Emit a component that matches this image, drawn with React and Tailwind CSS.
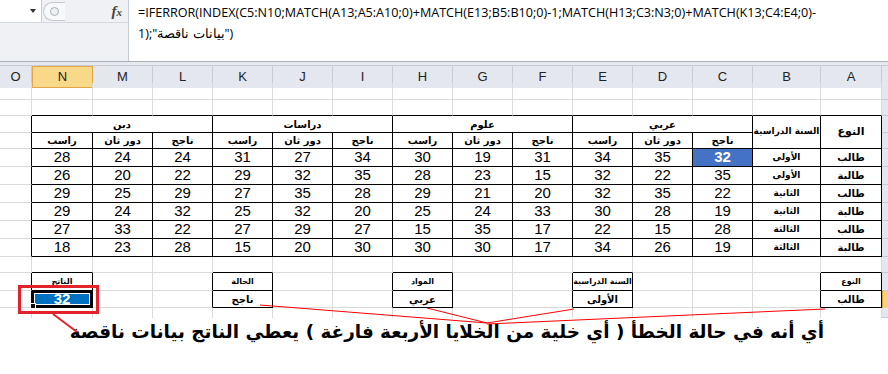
import React from 'react';

const COLS = ['O', 'N', 'M', 'L', 'K', 'J', 'I', 'H', 'G', 'F', 'E', 'D', 'C', 'B', 'A'];

const SUBS = ['راسب', 'دور ثان', 'ناجح'];
const GROUPS = ['دين', 'دراسات', 'علوم', 'عربي'];

const DATA = [
  { a: 'طالب', b: 'الأولى', v: [28, 24, 24, 31, 27, 34, 30, 19, 31, 34, 35, 32] },
  { a: 'طالبة', b: 'الأولى', v: [26, 20, 22, 29, 32, 35, 28, 23, 15, 32, 22, 35] },
  { a: 'طالب', b: 'الثانية', v: [29, 25, 29, 27, 35, 28, 29, 21, 20, 32, 35, 22] },
  { a: 'طالبة', b: 'الثانية', v: [29, 24, 32, 25, 32, 20, 25, 24, 33, 30, 28, 19] },
  { a: 'طالب', b: 'الثالثة', v: [27, 33, 22, 27, 29, 27, 15, 35, 17, 22, 15, 28] },
  { a: 'طالبة', b: 'الثالثة', v: [18, 23, 28, 15, 20, 30, 30, 30, 17, 34, 26, 19] },
];

const LOOKUP = {
  1: ['الناتج', null],
  4: ['الحالة', 'ناجح'],
  7: ['المواد', 'عربي'],
  10: ['السنة الدراسية', 'الأولى'],
  14: ['النوع', 'طالب'],
};

function inBox(r, c) {
  if (r >= 3 && r <= 10 && c >= 1 && c <= 14) return true;
  if ((r === 12 || r === 13) && LOOKUP[c]) return true;
  return false;
}

// build the cells of rows 1..14, left to right as they appear on screen
function buildRows() {
  const rows = [];
  for (let r = 1; r <= 14; r++) {
    const cells = [];
    if (r === 3) {
      cells.push({ r, c: 0 });
      GROUPS.forEach((g, i) => cells.push({ r, c: 1 + i * 3, cs: 3, text: g, kind: 'label' }));
      cells.push({ r, c: 13, rs: 2, text: 'السنة الدراسية', kind: 'small' });
      cells.push({ r, c: 14, rs: 2, text: 'النوع', kind: 'big' });
    } else if (r === 4) {
      cells.push({ r, c: 0 });
      for (let i = 0; i < 12; i++) cells.push({ r, c: 1 + i, text: SUBS[i % 3], kind: 'label' });
    } else if (r >= 5 && r <= 10) {
      const d = DATA[r - 5];
      cells.push({ r, c: 0 });
      d.v.forEach((n, i) => cells.push({ r, c: 1 + i, text: n, kind: r === 5 && i === 11 ? 'sel' : 'num' }));
      cells.push({ r, c: 13, text: d.b, kind: 'small' });
      cells.push({ r, c: 14, text: d.a, kind: 'label' });
    } else {
      for (let c = 0; c < 15; c++) {
        const l = LOOKUP[c];
        if (r === 12 && l) cells.push({ r, c, text: l[0], kind: 'tiny' });
        else if (r === 13 && c === 1) cells.push({ r, c, text: 32, kind: 'active' });
        else if (r === 13 && l) cells.push({ r, c, text: l[1], kind: 'label' });
        else cells.push({ r, c });
      }
    }
    cells.push({ r, c: 15, kind: 'hdr' });
    rows.push(...cells);
  }
  return rows;
}

function Cell({ cell }) {
  const { r, c, cs = 1, rs = 1, text, kind } = cell;
  if (kind === 'hdr') {
    return (
      <div
        className={
          r === 13
            ? 'bg-[#f6d47f] border-l border-[#e1a53c]'
            : 'bg-[#e4e8ee] border-b border-b-[#c5cbd3]'
        }
      />
    );
  }
  const lastC = c + cs - 1;
  const lastR = r + rs - 1;
  const rightBlack = inBox(r, lastC) || inBox(r, lastC + 1);
  const bottomBlack = inBox(lastR, c) || inBox(lastR + 1, c);
  const span = cs === 3 ? 'col-span-3' : rs === 2 ? 'row-span-2' : '';
  const borders = [
    'border-r',
    rightBlack ? 'border-r-black' : 'border-r-[#dadada]',
    r === 14 ? '' : 'border-b',
    bottomBlack ? 'border-b-black' : 'border-b-[#dadada]',
  ].join(' ');

  let inner = null;
  if (kind === 'num') {
    inner = <span className="text-[15px] font-['Liberation_Sans',sans-serif] text-black">{text}</span>;
  } else if (kind === 'sel') {
    inner = (
      <div className="flex h-full w-full items-center justify-center bg-[#4472c4] text-[15px] font-bold text-white font-['Liberation_Sans',sans-serif]">
        {text}
      </div>
    );
  } else if (kind === 'label') {
    inner = <span className="whitespace-nowrap text-[10px] font-bold font-['DejaVu_Sans',sans-serif] text-black">{text}</span>;
  } else if (kind === 'big') {
    inner = <span className="whitespace-nowrap text-[11px] font-bold font-['DejaVu_Sans',sans-serif] text-black">{text}</span>;
  } else if (kind === 'small') {
    inner = <span className="whitespace-nowrap text-[9px] font-bold font-['DejaVu_Sans',sans-serif] text-black">{text}</span>;
  } else if (kind === 'tiny') {
    inner = <span className="whitespace-nowrap text-[8px] font-bold font-['DejaVu_Sans',sans-serif] text-black">{text}</span>;
  } else if (kind === 'active') {
    inner = (
      <div className="relative h-full w-full border-2 border-black">
        <div className="flex h-full w-full items-center justify-center border border-white bg-[#0070c0] text-[15px] font-bold text-white font-['Liberation_Sans',sans-serif]">
          {text}
        </div>
        <div className="absolute -bottom-[4px] -left-[4px] h-[6px] w-[6px] border border-white bg-black" />
      </div>
    );
  }
  return (
    <div className={`${span} ${borders} flex items-center justify-center overflow-visible`}>
      {inner}
    </div>
  );
}

function FormulaBar() {
  return (
    <div className="flex h-[62px] border-b border-[#a9b0b8]">
      <div className="flex w-[128px] flex-col bg-[#eff1f4]">
        <div className="flex h-[23px] items-center border-b border-[#d5d9de]">
          <div className="flex h-full w-[42px] items-center justify-end border-r border-[#c9ced4] bg-white pr-[5px]">
            <span className="h-0 w-0 border-x-[3.5px] border-t-[4px] border-x-transparent border-t-[#333]" />
          </div>
          <div className="ml-[1px] flex h-[19px] w-[22px] items-center justify-center rounded-l-full border border-r-0 border-[#c3c8cf] bg-[#f7f8f9]">
            <span className="h-[9px] w-[9px] rounded-full border border-[#aab1ba] bg-[#eef0f2]" />
          </div>
          <div className="flex-1" />
          <span className="mr-[6px] font-['Liberation_Serif',serif] text-[15px] font-bold italic text-[#444]">
            f<span className="text-[11px]">x</span>
          </span>
        </div>
        <div className="flex-1" />
      </div>
      <div className="flex-1 border-l border-[#c6ccd3] bg-white pl-[9px] pt-[2px] font-['Open_Sans',sans-serif] text-[12.6px] leading-[21px] text-black">
        <div className="whitespace-nowrap">
          =IFERROR(INDEX(C5:N10;MATCH(A13;A5:A10;0)+MATCH(E13;B5:B10;0)-1;MATCH(H13;C3:N3;0)+MATCH(K13;C4:E4;0)-
        </div>
        <div className="whitespace-nowrap">1);"بيانات ناقصة")</div>
      </div>
    </div>
  );
}

function ColumnHeaders() {
  return (
    <div className="grid h-[17px] grid-cols-[32px_61px_repeat(11,60px)_68px_61px_6px] border-b border-[#9ea7b1]">
      {COLS.map((col) => (
        <div
          key={col}
          className={
            col === 'N'
              ? 'flex items-center justify-center border border-[#e2a646] bg-[#f8d98a] text-[13px] text-[#222] font-["Liberation_Sans",sans-serif]'
              : 'flex items-center justify-center border-r border-[#c7ccd3] bg-[#e4e8ee] text-[13px] text-[#222] font-["Liberation_Sans",sans-serif]'
          }
        >
          {col}
        </div>
      ))}
      <div className="bg-[#e4e8ee]" />
    </div>
  );
}

export default function App() {
  const cells = buildRows();
  return (
    <div className="relative h-[374px] w-[888px] overflow-hidden bg-white">
      <FormulaBar />
      <div className="h-[4px] border-b border-[#c8cdd4] bg-[#e6e9ed]" />
      <ColumnHeaders />
      <div className="grid grid-cols-[32px_61px_repeat(11,60px)_68px_61px_6px] grid-rows-[17px_16px_17px_16px_18px_18px_18px_18px_18px_18px_16px_18px_17px_10px]">
        {cells.map((cell, i) => (
          <Cell key={i} cell={cell} />
        ))}
      </div>
      <div
        dir="rtl"
        className="h-[56px] bg-white pr-[64px] text-right font-['DejaVu_Sans',sans-serif] text-[18.4px] font-bold leading-[28px] text-black whitespace-nowrap"
      >
        أي أنه في حالة الخطأ ( أي خلية من الخلايا الأربعة فارغة ) يعطي الناتج بيانات ناقصة
      </div>

      {/* callout: red box round the result and the pointer lines */}
      <div className="pointer-events-none absolute left-[18px] top-[285px] h-[29px] w-[81px] border-[3px] border-[#e3222b]" />
      <svg className="pointer-events-none absolute inset-0" width="888" height="374">
        <g stroke="#ff0000" strokeWidth="1" fill="none">
          <line x1="260" y1="305" x2="487" y2="323" />
          <line x1="427" y1="308" x2="487" y2="323" />
          <line x1="574" y1="309" x2="487" y2="323" />
          <line x1="825" y1="309" x2="487" y2="324" />
        </g>
        <line x1="53" y1="314" x2="77" y2="332" stroke="#e3222b" strokeWidth="2" />
      </svg>
    </div>
  );
}
